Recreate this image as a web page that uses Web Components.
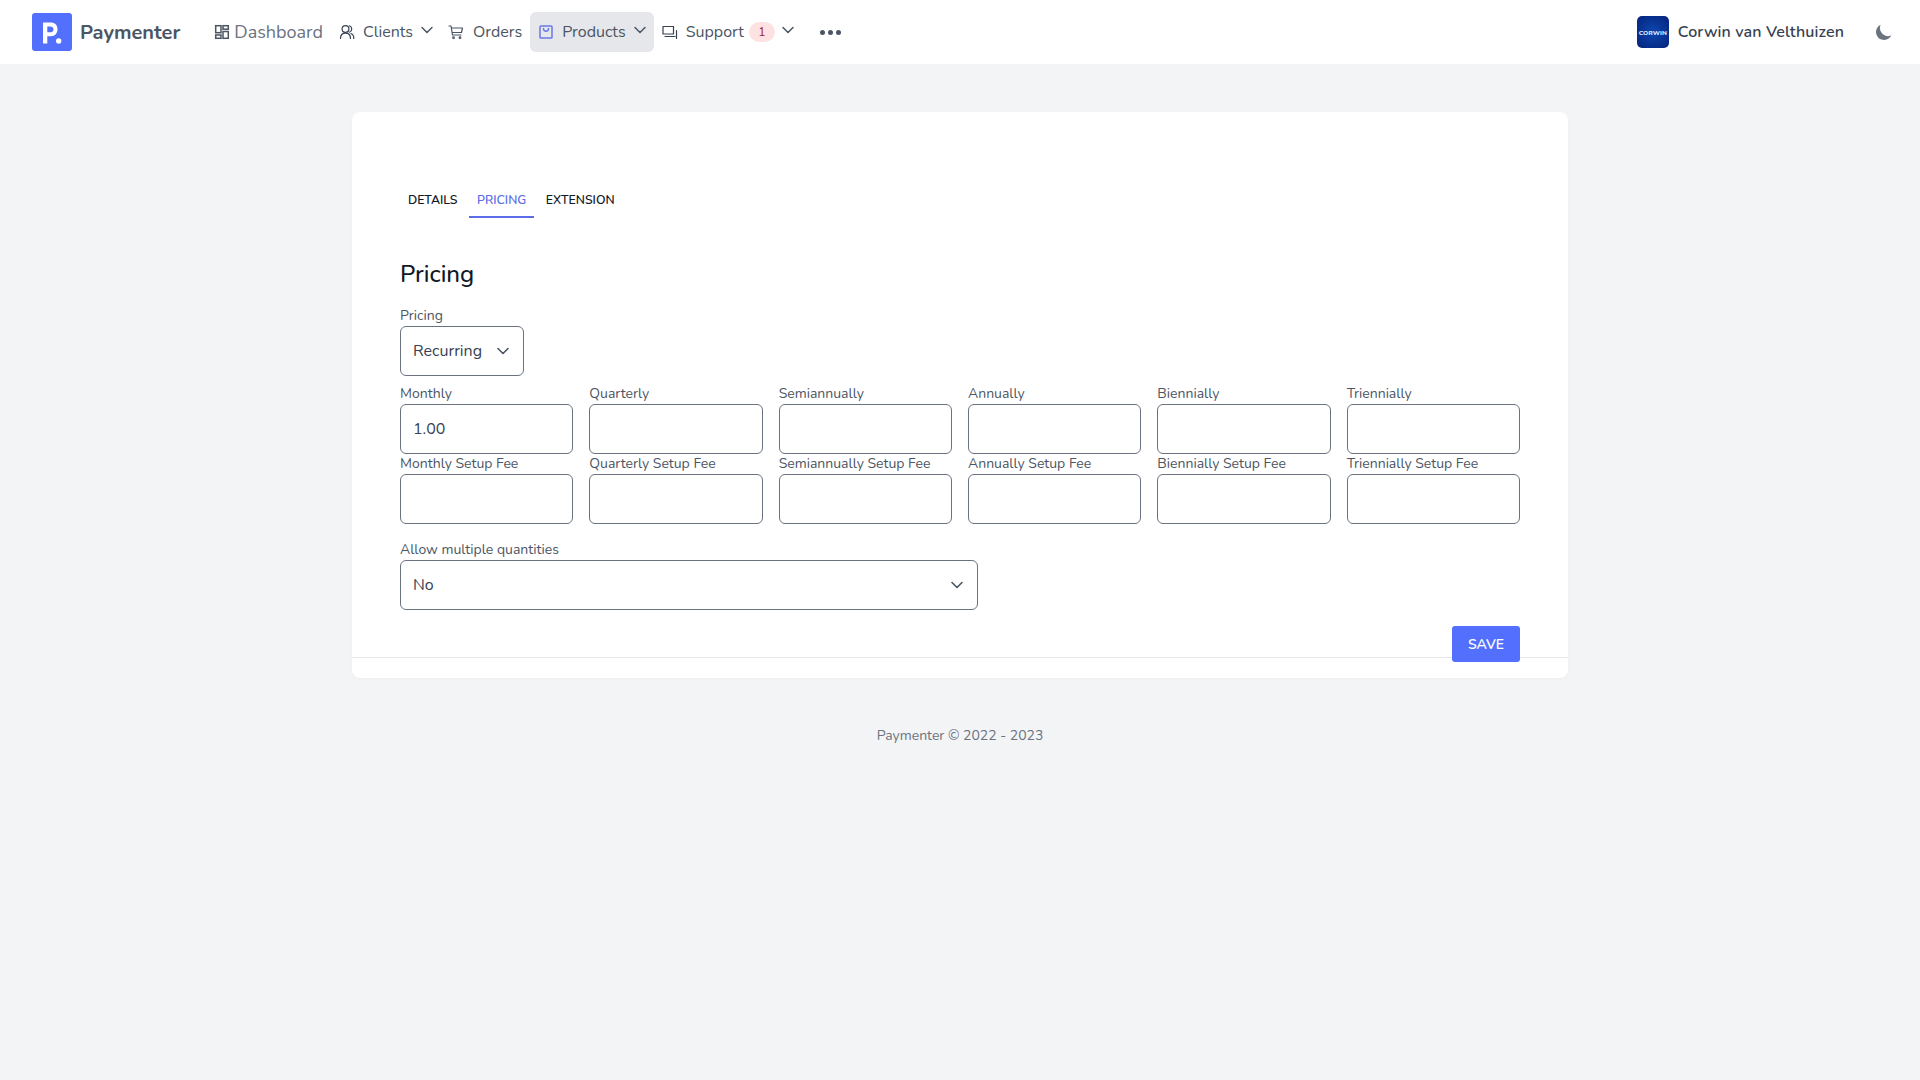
<!DOCTYPE html>
<html><head><meta charset="utf-8"><title>Paymenter</title>
<style>
html,body{margin:0;padding:0;background:#f3f4f6;font-family:"Nunito","Lato","Open Sans",sans-serif;height:100%}
</style></head><body>
<app-nav></app-nav>
<main-card>
  <tab-bar></tab-bar>
  <h-title>Pricing</h-title>
  <form-field label="Pricing" type="select" value="Recurring" style="width:124px;margin-bottom:8px"></form-field>
  <field-grid labels="Monthly,Quarterly,Semiannually,Annually,Biennially,Triennially" first="1.00"></field-grid>
  <field-grid labels="Monthly Setup Fee,Quarterly Setup Fee,Semiannually Setup Fee,Annually Setup Fee,Biennially Setup Fee,Triennially Setup Fee"></field-grid>
  <form-field label="Allow multiple quantities" type="select" value="No" style="width:578px;margin-top:16px"></form-field>
  <save-row></save-row>
</main-card>
<app-footer></app-footer>
<script>
const chev='<svg width="20" height="20" viewBox="0 0 20 20" fill="none" stroke="#4b5563" stroke-width="1.6" stroke-linecap="round" stroke-linejoin="round"><path d="M5 7.5l5 5 5-5"/></svg>';
const nchev='<svg width="16" height="16" viewBox="0 0 16 16" fill="none" stroke="#4b5563" stroke-width="1.5" stroke-linecap="round" stroke-linejoin="round"><path d="M3 5.500l5 5 5-5"/></svg>';
function def(name,html){customElements.define(name,class extends HTMLElement{connectedCallback(){if(this.shadowRoot)return;const s=this.attachShadow({mode:'open'});s.innerHTML=typeof html==='function'?html(this):html;}});}
def('nav-item',el=>{
  const active=el.hasAttribute('active');
  return `<style>:host{display:flex;align-items:center;height:40px;padding:0 8px;border-radius:6px;font-size:${el.getAttribute('size')||16}px;color:#4b5563;background:${active?'#e5e7eb':'transparent'}}
  ::slotted(svg){flex:none}
  .t{white-space:nowrap}
  </style><slot name="icon"></slot><span class="t" style="margin-left:${el.getAttribute('gap')||8}px;color:${el.getAttribute('color')||'#4b5563'}"><slot></slot></span><slot name="end"></slot>`;
});
def('app-nav',`<style>
:host{display:flex;align-items:center;height:64px;background:#fff;box-sizing:border-box;padding:0 26px 0 32px;color:#4b5563}
.logo{width:40px;height:38px;border-radius:3px;background:#5270fd;display:flex;flex:none}
.brand{font-size:20px;font-weight:700;color:#4b5563;margin:0 26px 0 8px;white-space:nowrap}
.items{display:flex;align-items:center;gap:0}
.sp{flex:1}
.ava{width:32px;height:32px;border-radius:5px;background:radial-gradient(circle,#0d47b0,#05237a);display:flex;align-items:center;justify-content:center;color:#dbe6ff;font-size:6.500px;font-weight:800;overflow:hidden;flex:none}
.name{font-size:16px;font-weight:600;color:#374151;margin-left:9px;white-space:nowrap;letter-spacing:.12px}
.moon{margin-left:30px;display:flex}
.dots{display:flex;gap:3px;margin-left:24px}
.dots i{width:5px;height:5px;border-radius:50%;background:#4b5563}
</style>
<div class="logo"><svg width="40" height="38" viewBox="0 0 40 38"><path fill="#fff" fill-rule="evenodd" d="M11 9.500h7.500c4.500 0 7 2.600 7 6.800s-2.500 7-7 7H15.300V30.500H11zM15.300 13.500v5.800h3c2 0 3.200-1.100 3.200-2.900s-1.200-2.900-3.200-2.900z"/><circle cx="26.700" cy="28" r="2.700" fill="#fff"/></svg></div>
<div class="brand">Paymenter</div>
<div class="items">
<nav-item size="18" gap="4" color="#6b7280"><svg slot="icon" width="16" height="16" viewBox="0 0 16 16" fill="none" stroke="#4b5563" stroke-width="1.500"><rect x="1.700" y="1.700" width="5.300" height="7"/><rect x="9" y="1.700" width="5.300" height="3.500"/><rect x="1.700" y="11" width="5.300" height="3.300"/><rect x="9" y="7.500" width="5.300" height="6.800"/></svg>Dashboard</nav-item>
<nav-item gap="8" style="padding-right:5px"><svg slot="icon" width="16" height="16" viewBox="0 0 16 16" fill="none" stroke="#374151" stroke-width="1.200" stroke-linecap="round"><circle cx="6.500" cy="5" r="3.400"/><path d="M1.500 14.500c0-3.300 2-5.300 5-5.300s5 2 5 5.300M10.500 1.800a3.400 3.400 0 0 1 0 6.400M12 9.500c1.800.7 2.800 2.500 2.800 5"/></svg>Clients<span slot="end" style="display:flex;margin:-4px 0 0 6px">${nchev}</span></nav-item>
<nav-item gap="9"><svg slot="icon" width="16" height="16" viewBox="0 0 16 16" fill="none" stroke="#4b5563" stroke-width="1.200" stroke-linecap="round" stroke-linejoin="round"><path d="M1 2h2l1.500 9h8.500M3.300 4H14.500l-1 4.500H4.300"/><circle cx="5.500" cy="13.700" r=".8"/><circle cx="12" cy="13.700" r=".8"/></svg>Orders</nav-item>
<nav-item active gap="8"><svg slot="icon" width="16" height="16" viewBox="0 0 16 16" fill="none" stroke="#6b7ae8" stroke-width="1.500"><rect x="2" y="2" width="12" height="12" rx=".8"/><path d="M5.500 4.500c0 3.500 5 3.500 5 0" stroke-linecap="round"/></svg>Products<span slot="end" style="display:flex;margin:-4px -2px 0 6px">${nchev}</span></nav-item>
<nav-item gap="8" style="padding-right:0"><svg slot="icon" width="16" height="16" viewBox="0 0 16 16" fill="none" stroke="#374151" stroke-width="1.200" stroke-linejoin="round" stroke-linecap="round"><path d="M1 2.500h10.500v7.500H1z"/><path d="M3 12.500h10M14.500 6.500v8"/></svg>Support<span slot="end" style="display:flex;align-items:center"><span style="display:inline-flex;align-items:center;justify-content:center;width:26px;height:20px;border-radius:10px;background:#fee2e2;color:#991b1b;font-size:12px;margin:0 5px 0 5px">1</span><span style="display:flex;margin-top:-4px">${nchev}</span></span></nav-item>
<div class="dots"><i></i><i></i><i></i></div>
</div>
<div class="sp"></div>
<div class="ava">CORWIN</div>
<div class="name">Corwin van Velthuizen</div>
<div class="moon"><svg width="20" height="20" viewBox="0 0 20 20"><path fill="#6b7280" d="M17.300 13.300A8 8 0 0 1 6.700 2.700a8 8 0 1 0 10.600 10.600z"/></svg></div>`);
def('main-card',`<style>:host{display:block;width:1216px;box-sizing:border-box;margin:48px auto 0;background:#fff;border-radius:8px;padding:62px 48px 0;height:566px;box-shadow:0 1px 2px rgba(0,0,0,.03)}</style><slot></slot>`);
def('tab-bar',`<style>:host{display:flex;height:44px;font-size:12.300px;font-weight:600;color:#111827}
.t{padding:11px 8px 2px;display:flex;align-items:center;height:29px;margin-right:3.500px;border-bottom:2px solid transparent;white-space:nowrap}
.a{color:#5b6ee8;border-color:#5b6ee8}
</style><div class="t">DETAILS</div><div class="t a">PRICING</div><div class="t">EXTENSION</div>`);
def('h-title',`<style>:host{display:block;font-size:24px;line-height:32px;font-weight:500;color:#111827;margin:40px 0 16px}</style><slot></slot>`);
def('form-field',el=>{
 const sel=el.getAttribute('type')==='select',v=el.getAttribute('value')||'';
 return `<style>:host{display:block;color:#4b5563}
 label{display:block;font-size:14px;height:20px;line-height:20px;color:#4b5563;white-space:nowrap}
 .b{box-sizing:border-box;height:50px;border:1px solid #6b7280;border-radius:6px;background:#fff;display:flex;align-items:center;padding:0 12px;font-size:16px;color:#374151;justify-content:space-between}
 svg{flex:none;margin-right:-2px}
 </style><label>${el.getAttribute('label')}</label><div class="b"><span>${v}</span>${sel?chev:''}</div>`;
});
def('field-grid',el=>{
 const ls=el.getAttribute('labels').split(','),f=el.getAttribute('first')||'';
 return `<style>:host{display:grid;grid-template-columns:repeat(6,1fr);column-gap:16px}</style>`+
 ls.map((l,i)=>`<form-field label="${l}" value="${i==0?f:''}"></form-field>`).join('');
});
def('save-row',`<style>:host{display:block;position:relative;height:68px}
.l{position:absolute;left:-48px;right:-48px;top:47px;height:1px;background:#e5e7eb}
.s{position:absolute;right:0;top:16px;width:68px;height:36px;background:#5270fd;color:#fff;border-radius:3px;display:flex;align-items:center;justify-content:center;font-size:14px;font-weight:600}
</style><div class="l"></div><div class="s">SAVE</div>`);
def('app-footer',`<style>:host{display:block;text-align:center;font-size:14px;color:#6b7280;margin-top:48px;line-height:20px}</style>Paymenter © 2022 - 2023`);
</script></body></html>
